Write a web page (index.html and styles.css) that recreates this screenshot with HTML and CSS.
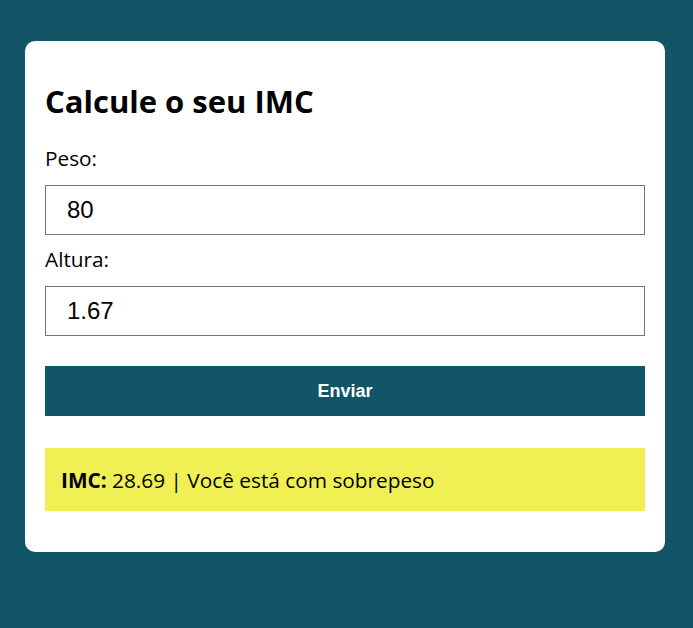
FILE: index.html
```html
<!DOCTYPE html>
<html lang="pt-BR">
<head>
<meta charset="utf-8">
<title>Calcule o seu IMC</title>
<link rel="stylesheet" href="styles.css">
</head>
<body>
<main class="card">
  <h1 class="title">Calcule o seu IMC</h1>
  <form class="form">
    <label class="label" for="peso">Peso:</label>
    <input class="input" id="peso" type="text" value="80">
    <label class="label" for="altura">Altura:</label>
    <input class="input" id="altura" type="text" value="1.67">
    <button class="button" type="button">Enviar</button>
  </form>
  <div class="result"><p class="result-text"><strong>IMC:</strong> 28.69 | Você está com sobrepeso</p></div>
</main>
</body>
</html>
```
FILE: styles.css
```css
html, body {
  margin: 0;
  padding: 0;
}
body {
  background: #115566;
  font-family: "Open Sans", "DejaVu Sans", sans-serif;
  color: #000;
  padding: 41px 0 0 25px;
  min-height: 628px;
  box-sizing: border-box;
}
.card {
  width: 600px;
  background: #fff;
  border-radius: 10px;
  padding: 20px 20px 41px;
}
.title {
  font-size: 31px;
  font-weight: 700;
  margin: 19px 0 23px;
  line-height: 42px;
}
.form {
  display: flex;
  flex-direction: column;
}
.label {
  font-size: 20.8px;
  line-height: 27px;
  margin-bottom: 13px;
}
.input {
  box-sizing: border-box;
  height: 50px;
  border: 1px solid #767676;
  border-radius: 0;
  padding: 0 20px 0 21px;
  font-family: "Liberation Sans", Arial, sans-serif;
  font-size: 24px;
  margin-bottom: 11px;
  outline: none;
}
.button {
  margin-top: 19px;
  height: 50px;
  border: none;
  background: #115566;
  color: #fff;
  font-family: "Liberation Sans", Arial, sans-serif;
  font-weight: 700;
  font-size: 18px;
}
.result {
  margin-top: 32px;
  background: #f0f055;
  padding: 0 16px;
  height: 63px;
  display: flex;
  align-items: center;
}
.result-text {
  margin: 0;
  font-size: 20.8px;
}
```
